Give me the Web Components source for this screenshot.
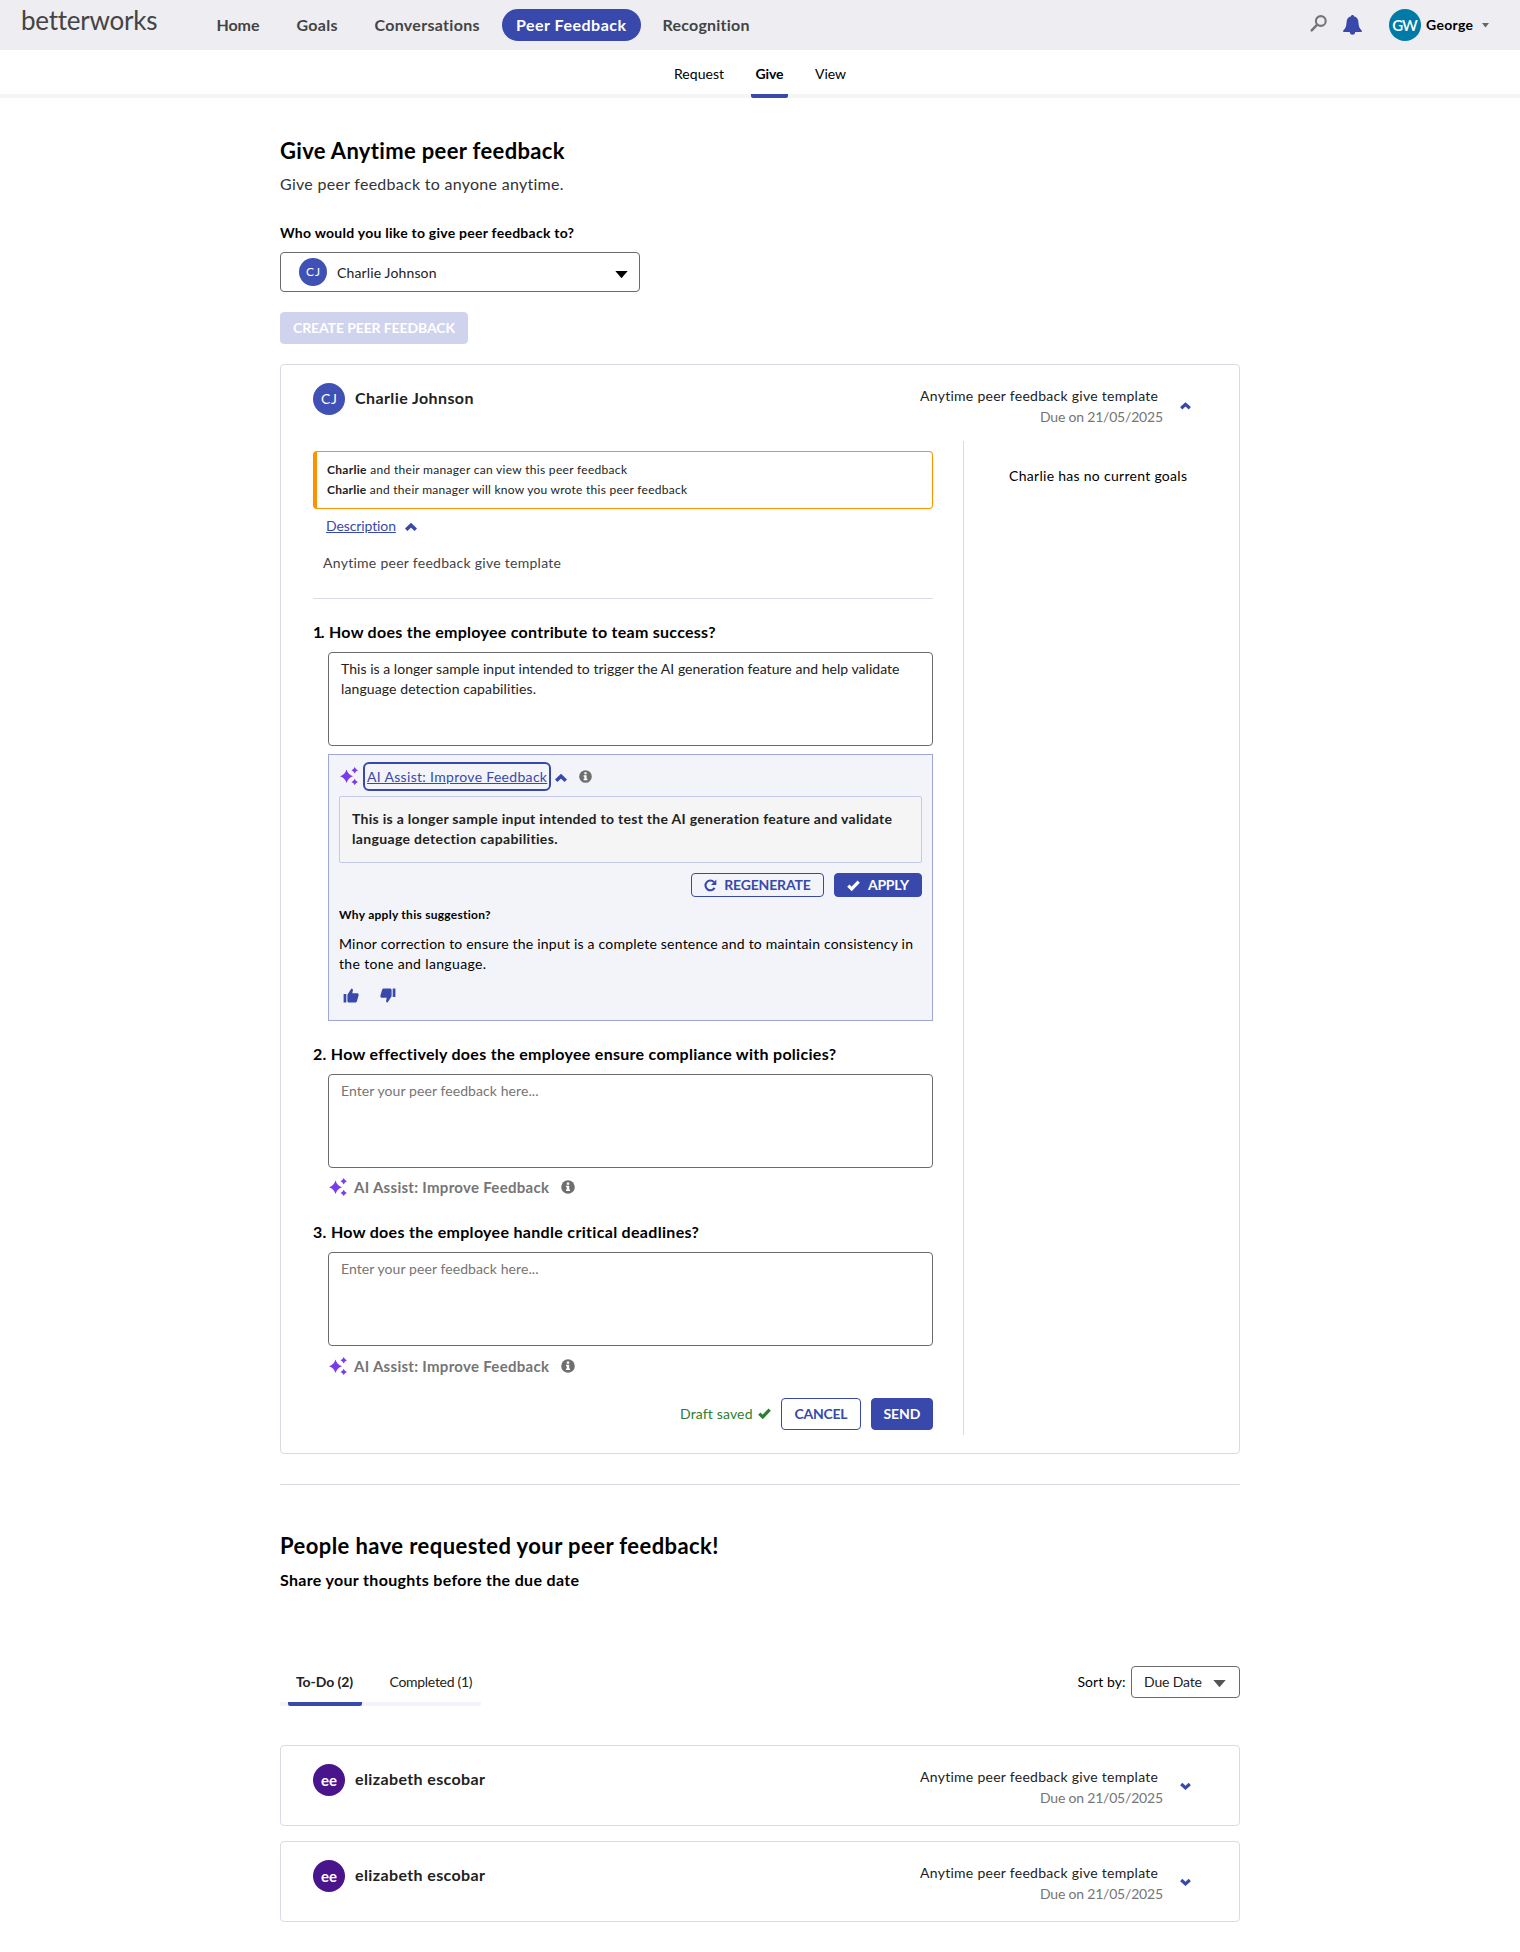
<!DOCTYPE html>
<html lang="en">
<head>
<meta charset="utf-8">
<title>Peer Feedback</title>
<style>
html,body{margin:0;padding:0;background:#fff}
body{font-family:Lato,"Open Sans",sans-serif;color:#000;font-size:14px}
</style>
</head>
<body>
<bw-app></bw-app>
<script>
const define=(name,html,setup)=>{
  const t=document.createElement('template');t.innerHTML=html;
  customElements.define(name,class extends HTMLElement{
    constructor(){super();this.attachShadow({mode:'open'}).append(t.content.cloneNode(true));}
    connectedCallback(){if(setup)setup(this,this.shadowRoot);}
  });
};

const icons={
 search:[17,17,'<circle cx="10.8" cy="6" r="4.900" fill="none" stroke="#757575" stroke-width="2.100"/><path d="M7.200 9.700 1.700 15.400" stroke="#757575" stroke-width="2.500" stroke-linecap="round"/>'],
 bell:[19,20,'<path fill="#3849ab" d="M9.500 0c.8 0 1.400.5 1.400 1.300 2.900.5 4.300 2.600 4.500 5.700.3 4 .8 6.200 3.300 8.500.5.500.3 1.500-.6 1.500H.9c-.9 0-1.100-1-.6-1.500C2.800 13.200 3.300 11 3.600 7c.2-3.100 1.600-5.200 4.500-5.700C8.100.5 8.700 0 9.500 0zM6.800 17h5.400c0 1.800-1.100 2.700-2.700 2.700S6.800 18.800 6.800 17z"/>'],
 caret:[13,7,'<path fill="currentColor" d="M.3 0h12.400L6.900 6.700a.6.6 0 0 1-.8 0z"/>'],
 caretsm:[7,5,'<path fill="#666" d="M0 0h7L3.500 4.600z"/>'],
 up:[12,8,'<path fill="none" stroke="#3849ab" stroke-width="3.500" d="M1.200 6.700 6 2.200l4.800 4.500"/>'],
 upsm:[11,8,'<path fill="none" stroke="#3849ab" stroke-width="3.200" d="M1.200 6.200 5.500 2.300l4.300 3.900"/>'],
 downsm:[11,8,'<path fill="none" stroke="#3849ab" stroke-width="3.200" d="M1.200 1 5.500 4.900l4.300-3.900"/>'],
 sparkle:[18,18,'<g fill="#7c3aed"><path d="M6.500 2.500Q8 7.700 13 9.200 8 10.700 6.500 16 5 10.700 0 9.200 5 7.700 6.500 2.500z"/><path d="M14.700 0q.9 2.300 3.200 3.200-2.300.9-3.200 3.200-.9-2.300-3.200-3.200 2.300-.9 3.200-3.200zM14.700 11.700q.9 2.300 3.200 3.200-2.300.9-3.200 3.200-.9-2.300-3.200-3.200 2.300-.9 3.200-3.200z"/></g>'],
 info:[14,14,'<circle cx="7" cy="7" r="6.800" fill="#6f6f6f"/><path fill="#fff" d="M5.800 2.500h2.400v2.200H5.800zM5 5.700h3.200v3.800H9v1.600H5V9.500h.8V7.300H5z"/>'],
 redo:[13,13,'<path fill="none" stroke="#3849ab" stroke-width="2.100" d="M10.600 8.900A4.900 4.900 0 1 1 10 3.100"/><path fill="#3849ab" d="M12.300.6v5.300H7z"/>'],
 check:[13,11,'<path fill="none" stroke="currentColor" stroke-width="3.200" d="M1.300 5.700 4.700 8.900 11.700 1.700"/>'],
 thumb:[16,15,'<path fill="#3849ab" d="M.6 6h2.700v8.500H.6zM4.400 6.700 8.400.4c.9.1 1.700.7 1.500 1.900L9.300 5.300h4.900c.9 0 1.400.7 1.400 1.500 0 .4 0 .6-.1.900l-1.600 5.500c-.3.900-.9 1.300-1.700 1.300H5.900c-.9 0-1.500-.6-1.500-1.500z"/>']
};
define('bw-icon','<style>:host{display:block;flex:none}svg{display:block;overflow:visible}</style><i></i>',(h,r)=>{
  const [w,ht,p]=icons[h.getAttribute('name')];
  const s=+h.getAttribute('size')||w;
  r.querySelector('i').innerHTML=`<svg width="${s}" height="${ht*s/w}" viewBox="0 0 ${w} ${ht}">${p}</svg>`;
});

define('bw-avatar',`<style>:host{display:flex;flex:none;align-items:center;justify-content:center;width:var(--d,32px);height:var(--d,32px);border-radius:50%;background:var(--bg,#3f51b5);color:#fff}</style><slot></slot>`);

define('bw-button',`<style>
:host{display:flex;box-sizing:border-box;flex:none;align-items:center;justify-content:center;height:32px;border-radius:4px;background:#3849ab;color:#fff;border:1px solid #3849ab}
:host([kind=outline]){background:#fff;color:#3849ab}
:host([kind=clear]){background:transparent;color:#3849ab}
:host([kind=off]){background:#d0d3ee;border-color:#d0d3ee}
</style><slot></slot>`);

define('bw-header',`<style>
:host{display:flex;align-items:center;height:50px;background:#eeedf2;color:#444;box-sizing:border-box;padding-left:21px;padding-right:31px}
nav{display:flex;align-items:center;margin:-1px 0 0 59px}
nav>*{margin-right:37px}
.pill{display:flex;align-items:center;justify-content:center;width:139px;height:32px;border-radius:16px;background:#3849ab;color:#fff;margin:1px 22px 0 -15px}
.pill bw-text{margin-top:-1px}
.logo{margin-top:-10px}
.tools{margin-left:auto;display:flex;align-items:center;color:#000}
</style>
<bw-text class="logo" w="136.500" size="26" weight="400" lh="30">betterworks</bw-text>
<nav><bw-text w="43" size="16" weight="700" lh="24">Home</bw-text><bw-text w="41" size="16" weight="700" lh="24">Goals</bw-text><bw-text w="105" size="16" weight="700" lh="24">Conversations</bw-text><div class="pill"><bw-text w="110" size="16" weight="700" lh="24">Peer Feedback</bw-text></div><bw-text w="87" size="16" weight="700" lh="24">Recognition</bw-text></nav>
<div class="tools"><bw-icon name="search" style="margin:-3px 16px 0 0"></bw-icon><bw-icon name="bell" style="margin-right:27px"></bw-icon>
<bw-avatar style="--bg:#007ba7"><bw-text w="25.500" size="15" weight="600">GW</bw-text></bw-avatar>
<bw-text w="47" size="14" weight="700" style="margin:-1px 9px 0 5px">George</bw-text><bw-icon name="caretsm"></bw-icon></div>`);

define('bw-subnav',`<style>
:host{display:flex;justify-content:center;height:48px;box-sizing:border-box;border-bottom:4px solid #f5f5f5}
.t{display:flex;justify-content:center;height:48px;box-sizing:border-box;padding-top:14px}
.on{border-bottom:4px solid #3849ab;border-radius:2px;width:37px;margin:0 27px}
</style><div class="t"><bw-text w="50">Request</bw-text></div><div class="t on"><bw-text w="28" weight="700">Give</bw-text></div><div class="t"><bw-text w="31">View</bw-text></div>`);

define('bw-select',`<style>
:host{display:flex;align-items:center;box-sizing:border-box;border:1px solid #6b6b6b;border-radius:4px;color:#222}
bw-icon{margin-left:auto}
</style><slot></slot><bw-icon name="caret" style="color:var(--caret,#000);margin-top:var(--cm,0)"></bw-icon>`);

define('feedback-card',`<style>
:host{display:block;box-sizing:border-box;border:1px solid #dadae3;border-radius:4px;padding-bottom:3px}
:host([open]){padding-bottom:18px}
header{display:flex;align-items:flex-start;height:76px;box-sizing:border-box;padding:18px 48px 0 32px;color:#222}
.name{margin:3px 0 0 10px}
.meta{margin-left:auto;display:flex;flex-direction:column;align-items:flex-end;gap:.5px;padding-top:3px}
.meta bw-text:first-child{margin-right:5px}
.meta bw-text:last-child{color:#757575}
.chev{margin:19px 0 0 17px}
</style><header><slot name="avatar"></slot><div class="name"><slot name="name"></slot></div>
<div class="meta"><bw-text w="238">Anytime peer feedback give template</bw-text><bw-text w="123">Due on 21/05/2025</bw-text></div>
<div class="chev"></div></header><slot></slot>`,(h,r)=>{
  r.querySelector('.chev').innerHTML=`<bw-icon name="${h.hasAttribute('open')?'upsm':'downsm'}"></bw-icon>`;
});

define('feedback-notice',`<style>
:host{display:block;box-sizing:border-box;height:58px;border:1px solid #ff9100;border-left-width:4px;border-radius:4px;padding:8px 0 0 10px;color:#222}
</style><bw-text w="300" size="12"><b>Charlie</b> and their manager can view this peer feedback</bw-text><bw-text w="360" size="12"><b>Charlie</b> and their manager will know you wrote this peer feedback</bw-text>`);

define('feedback-question',`<style>
:host{display:block;margin-top:21px}
.box{margin:8px 0 0 15px;height:94px;box-sizing:border-box;border:1px solid #6b6b6b;border-radius:4px;padding:6px 0 0 12px;color:#222}
:host([empty]) .box{color:#757575}
</style><slot name="title"></slot><div class="box"><slot></slot></div>`);

define('ai-hint',`<style>
:host{display:flex;align-items:center;height:24px;margin:7px 0 0 16px;color:#757575}
</style><bw-icon name="sparkle"></bw-icon><bw-text w="195" size="15" weight="700" lh="24" style="margin:0 12px 0 7px">AI Assist: Improve Feedback</bw-text><bw-icon name="info"></bw-icon>`);

define('ai-panel',`<style>
:host{display:block;box-sizing:border-box;margin:8px 0 0 15px;height:267px;border:1px solid #9fa6db;background:#f3f4fa;padding:6px 10px 0}
.head{display:flex;align-items:center;height:30px}
.link{display:flex;align-items:center;box-sizing:border-box;width:188px;height:29px;border:2px solid #3849ab;border-radius:6px;padding:0 2px;margin:1px 4px 0 5px;color:#3849ab}
.link bw-text{text-decoration:underline}
.sug{box-sizing:border-box;height:67px;margin-top:5px;border:1px solid #c5c9e9;border-radius:2px;background:#f5f5f5;color:#222;padding:12px 0 0 12px}
.act{display:flex;justify-content:flex-end;gap:10px;margin-top:10px}
.act bw-button{height:24px}
.act bw-text{margin-top:-1px}
.thumbs{display:flex;gap:21px;margin:14px 0 0 4px}
</style>
<div class="head"><bw-icon name="sparkle" style="margin-left:1px"></bw-icon><div class="link"><bw-text w="180">AI Assist: Improve Feedback</bw-text></div><bw-icon name="up" style="margin-top:4px"></bw-icon><bw-icon name="info" size="13" style="margin-left:12px"></bw-icon></div>
<div class="sug"><bw-text w="540" weight="700">This is a longer sample input intended to test the AI generation feature and validate</bw-text><bw-text w="205.500" weight="700">language detection capabilities.</bw-text></div>
<div class="act"><bw-button kind="clear" style="width:133px"><bw-icon name="redo" style="margin-right:7px"></bw-icon><bw-text w="86.500" weight="700">REGENERATE</bw-text></bw-button><bw-button style="width:88px"><bw-icon name="check" style="margin-right:8px"></bw-icon><bw-text w="41" weight="700">APPLY</bw-text></bw-button></div>
<bw-text w="151.500" size="12" weight="700" style="margin-top:8px">Why apply this suggestion?</bw-text>
<bw-text w="574" style="margin-top:9px">Minor correction to ensure the input is a complete sentence and to maintain consistency in</bw-text><bw-text w="147">the tone and language.</bw-text>
<div class="thumbs"><bw-icon name="thumb"></bw-icon><bw-icon name="thumb" style="transform:rotate(180deg)"></bw-icon></div>`);

define('bw-tabs',`<style>
:host{display:flex;width:201px;height:40px;box-sizing:border-box;border-bottom:4px solid #f4f4f8;border-radius:2px;color:#222;padding-left:8px}
div{height:40px;box-sizing:border-box;padding-top:6px}
.on{width:73.500px;padding-left:8px;border-bottom:4px solid #3849ab;border-radius:2px;margin-right:28px}
</style><div class="on"><bw-text w="57" weight="700">To-Do (2)</bw-text></div><div><bw-text w="83">Completed (1)</bw-text></div>`);

define('bw-app',`<style>
:host{display:block;height:1952px;overflow:hidden;background:#fff}
main{width:960px;margin:0 auto;padding-top:38px}
.body{display:flex;height:994px;padding-left:32px}
.left{width:620px;padding-top:10px;margin-right:30px}
.right{flex:1;border-left:1px solid #dadae3;padding:25px 0 0 45px}
.desc{display:flex;align-items:center;margin:7px 0 0 13px;color:#3849ab}
.hr{height:1px;background:#dadae3}
.foot{display:flex;justify-content:flex-end;align-items:center;margin-top:20px;color:#2e7d32}
.bar{display:flex;justify-content:space-between;align-items:flex-start;margin-top:74px}
.sort{display:flex;align-items:center}
.desc bw-text{text-decoration:underline}
.one{letter-spacing:-1.500px}
</style>
<bw-header></bw-header><bw-subnav></bw-subnav>
<main>
<bw-text w="284.500" size="22" weight="700" lh="30">Give Anytime peer feedback</bw-text>
<bw-text w="283.500" size="16" lh="24" style="margin-top:6px;color:#333">Give peer feedback to anyone anytime.</bw-text>
<bw-text w="294" weight="700" style="margin-top:27px">Who would you like to give peer feedback to?</bw-text>
<bw-select style="width:360px;height:40px;margin-top:9px;padding:0 11px 0 18px;--cm:4px"><bw-avatar style="--d:28px"><bw-text w="14" size="12">CJ</bw-text></bw-avatar><bw-text w="99.500" style="margin:2px 0 0 10px">Charlie Johnson</bw-text></bw-select>
<bw-button kind="off" style="width:188px;margin-top:20px"><bw-text w="162" weight="700">CREATE PEER FEEDBACK</bw-text></bw-button>
<feedback-card open style="margin-top:20px">
 <bw-avatar slot="avatar"><bw-text w="16" size="14">CJ</bw-text></bw-avatar><bw-text slot="name" w="118.500" size="16" weight="700" lh="24">Charlie Johnson</bw-text>
 <div class="body"><div class="left">
  <feedback-notice></feedback-notice>
  <div class="desc"><bw-text w="70">Description</bw-text><bw-icon name="up" style="margin:2px 0 0 9px"></bw-icon></div>
  <bw-text w="238" style="margin:17px 0 25px 10px;color:#444">Anytime peer feedback give template</bw-text>
  <div class="hr"></div>
  <feedback-question><bw-text slot="title" w="402.500" size="16" weight="700" lh="24"><span class="one">1</span>. How does the employee contribute to team success?</bw-text><bw-text w="558.500">This is a longer sample input intended to trigger the AI generation feature and help validate</bw-text><bw-text w="195">language detection capabilities.</bw-text></feedback-question>
  <ai-panel></ai-panel>
  <feedback-question empty><bw-text slot="title" w="523" size="16" weight="700" lh="24">2. How effectively does the employee ensure compliance with policies?</bw-text><bw-text w="197.500">Enter your peer feedback here...</bw-text></feedback-question>
  <ai-hint></ai-hint>
  <feedback-question empty><bw-text slot="title" w="386" size="16" weight="700" lh="24">3. How does the employee handle critical deadlines?</bw-text><bw-text w="197.500">Enter your peer feedback here...</bw-text></feedback-question>
  <ai-hint style="margin-top:8px"></ai-hint>
  <div class="foot"><bw-text w="72.500">Draft saved</bw-text><bw-icon name="check" style="margin:-1px 10px 0 5.500px"></bw-icon><bw-button kind="outline" style="width:80px;margin-right:10px"><bw-text w="53" weight="700">CANCEL</bw-text></bw-button><bw-button style="width:62px"><bw-text w="37" weight="700">SEND</bw-text></bw-button></div>
 </div><div class="right"><bw-text w="178">Charlie has no current goals</bw-text></div></div>
</feedback-card>
<div class="hr" style="margin-top:30px"></div>
<bw-text w="438.500" size="22" weight="700" lh="30" style="margin-top:46px">People have requested your peer feedback!</bw-text>
<bw-text w="299" size="16" weight="700" lh="24" style="margin-top:7px">Share your thoughts before the due date</bw-text>
<div class="bar"><bw-tabs></bw-tabs><div class="sort"><bw-text w="48" style="margin-right:5.500px">Sort by:</bw-text><bw-select style="width:109px;height:32px;padding:0 13px 0 12px;--caret:#555;--cm:2px"><bw-text w="58">Due Date</bw-text></bw-select></div></div>
<feedback-card style="margin-top:39px"><bw-avatar slot="avatar" style="--bg:#4a148c"><bw-text w="16" size="15" weight="700">ee</bw-text></bw-avatar><bw-text slot="name" w="130" size="16" weight="700" lh="24">elizabeth escobar</bw-text></feedback-card>
<feedback-card style="margin-top:15px"><bw-avatar slot="avatar" style="--bg:#4a148c"><bw-text w="16" size="15" weight="700">ee</bw-text></bw-avatar><bw-text slot="name" w="130" size="16" weight="700" lh="24">elizabeth escobar</bw-text></feedback-card>
</main>`);

// One line of type, tracked so that it fills the measure given in "w".
define('bw-text','<style>:host{display:block;flex:none}span{display:inline-block;white-space:nowrap;text-decoration:inherit;vertical-align:top}</style><span><slot></slot></span>',(h,r)=>{
  const s=r.querySelector('span'),g=(n,d)=>h.getAttribute(n)||d,w=+g('w',0);
  h.style.fontSize=g('size',14)+'px';h.style.fontWeight=g('weight',400);
  h.style.lineHeight=g('lh',20)+'px';h.style.height=g('lh',20)+'px';
  h.style.width=w+'px';
  const n=h.textContent.length;
  let ls=0;
  for(let i=0;i<3;i++){
    ls+=(w-(s.getBoundingClientRect().width-ls))/(n-1);
    s.style.letterSpacing=ls.toFixed(3)+'px';
  }
});
</script>
</body>
</html>
